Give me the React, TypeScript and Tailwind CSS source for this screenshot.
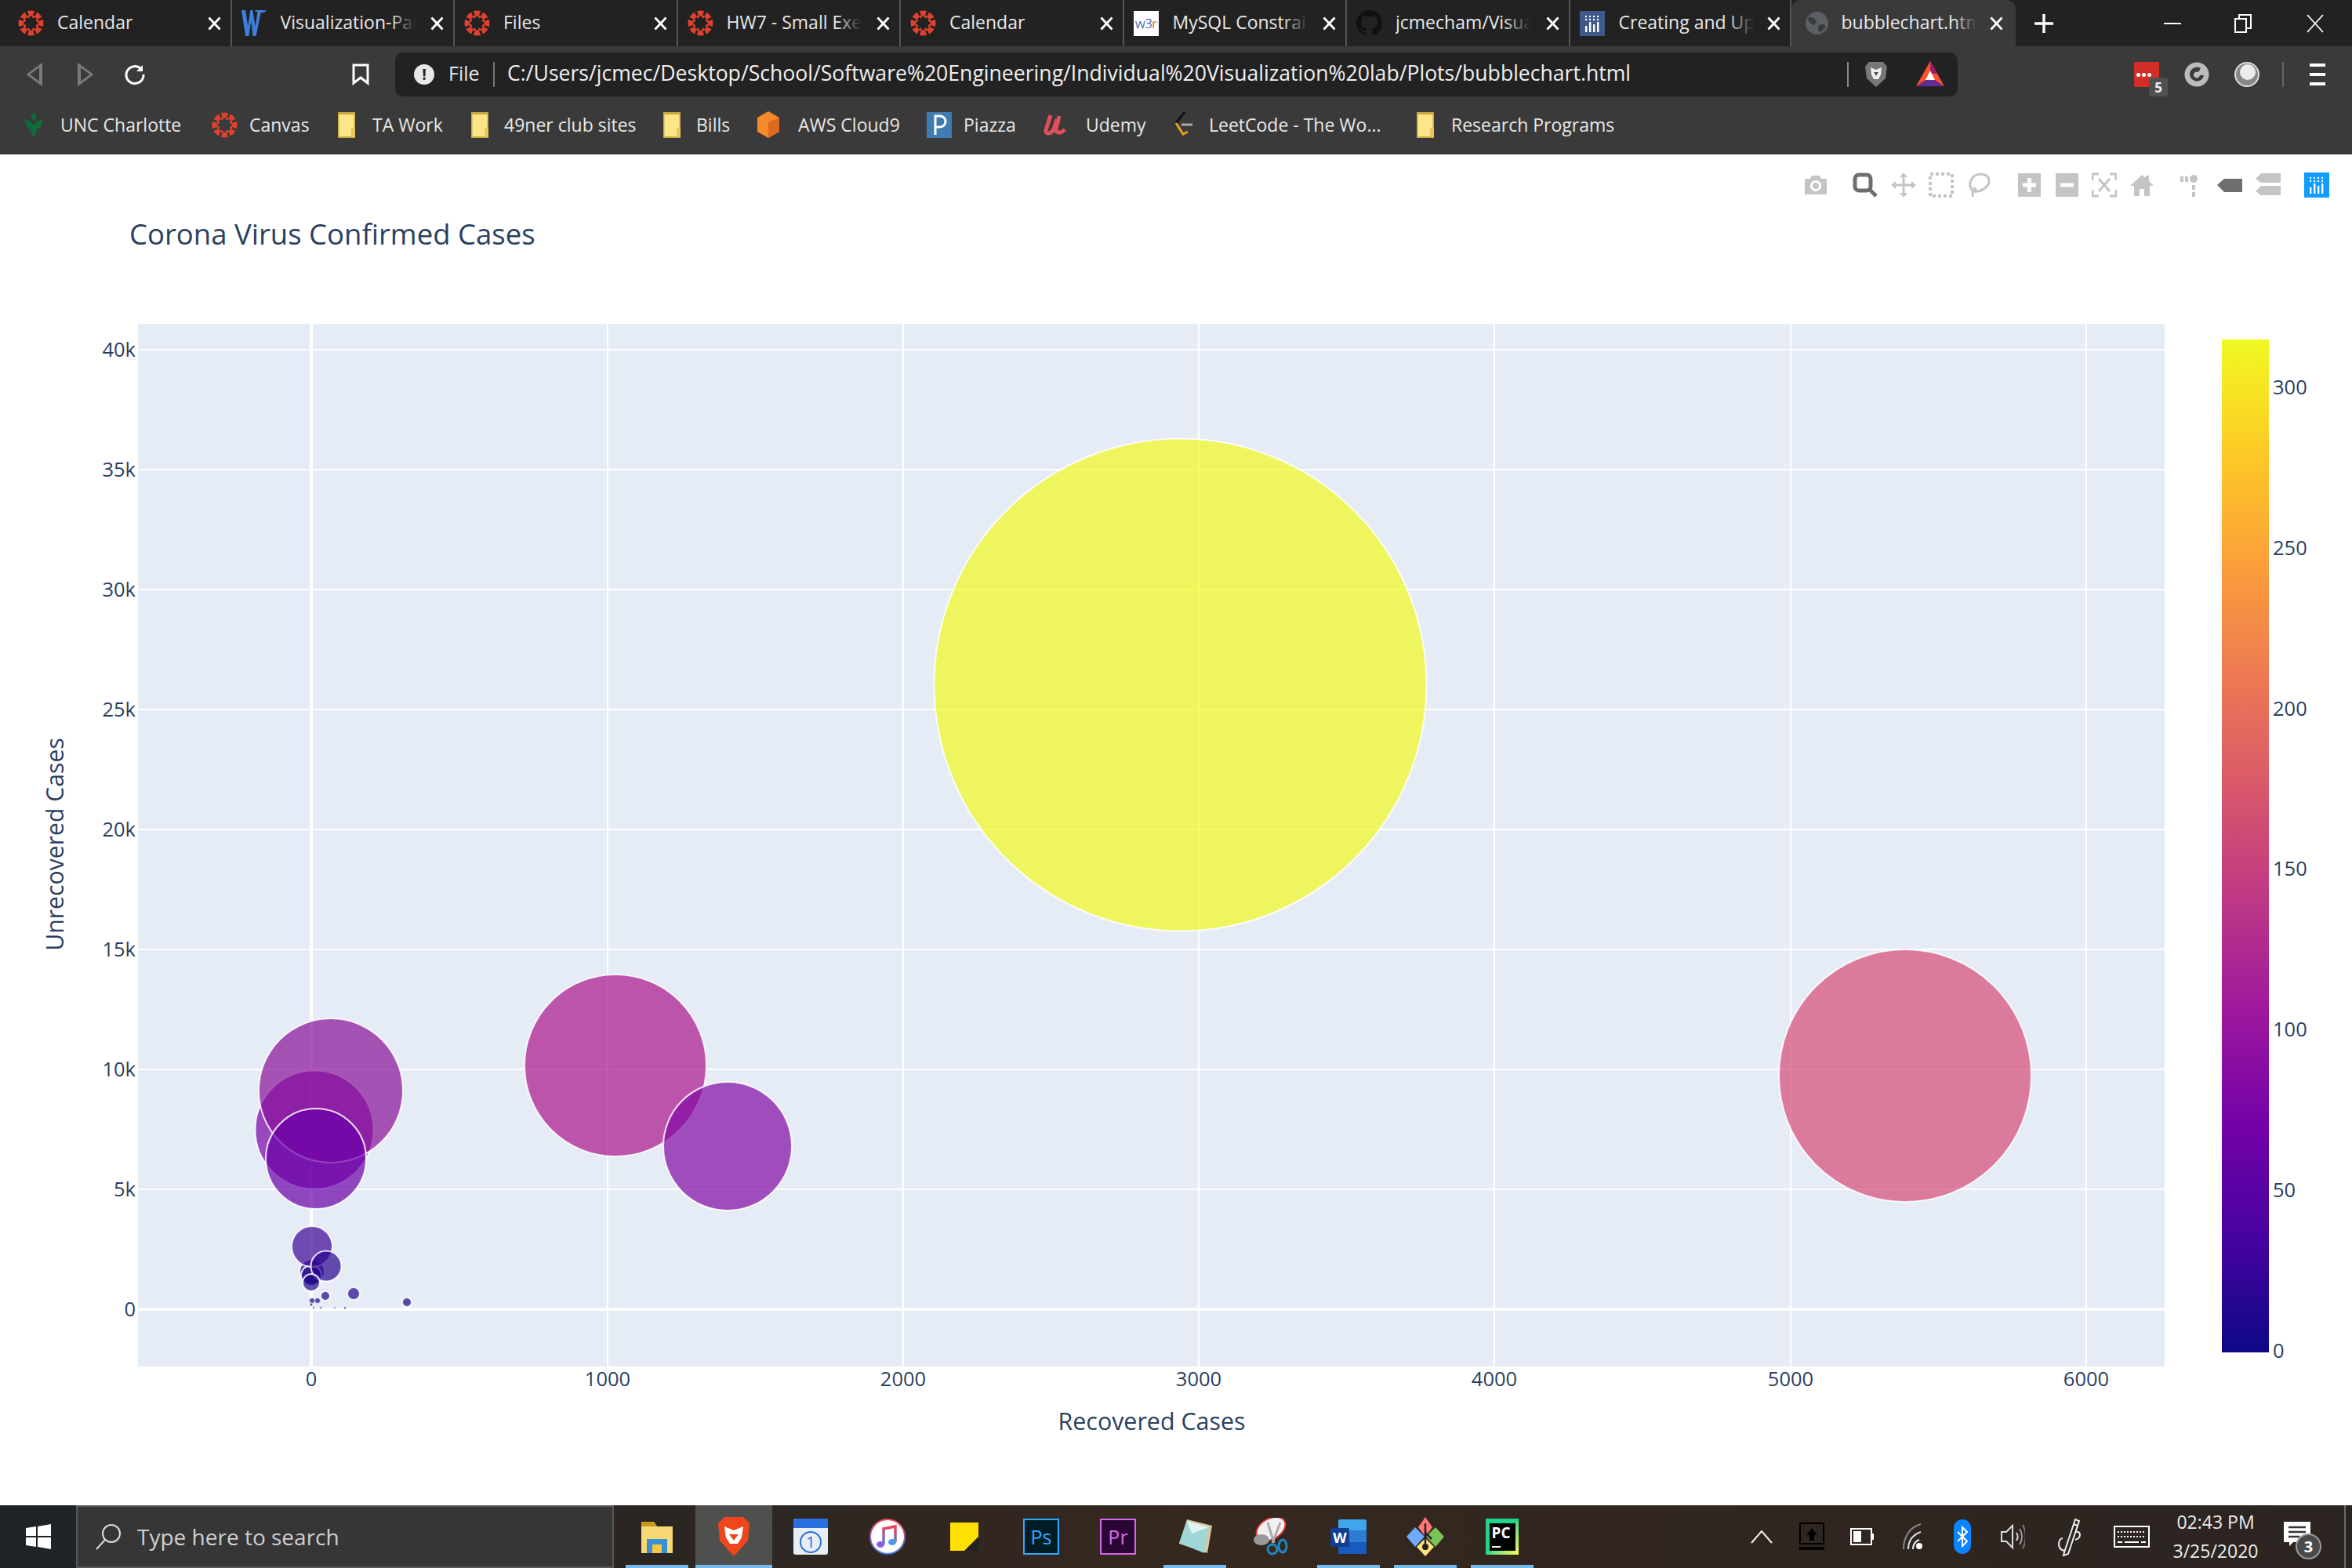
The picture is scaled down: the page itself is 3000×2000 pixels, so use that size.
import React from "react";

const Canvas = ({ s = 33 }: { s?: number }) => (
  <svg width={s} height={s} viewBox="0 0 32 32" fill="#e0402e">
    {[0, 1, 2, 3, 4, 5, 6, 7].map((i) => (
      <g key={i}>
        <path d="M11.500 1.200 a15.500 15.500 0 0 1 9 0 l-2.500 6.300 a8.500 8.500 0 0 0 -4 0z" transform={`rotate(${i * 45} 16 16)`} />
        <circle cx="16" cy="7.500" r="1.700" transform={`rotate(${i * 45 + 22.5} 16 16)`} />
      </g>
    ))}
  </svg>
);
const Word = () => (
  <svg width="33" height="33" viewBox="0 0 32 32" fill="#3f7fdc">
    <path d="M0 0h5l3 20 3-20h3l3 20 3-18h-3V0h14l-3 3h-4l-6 29h-4L12 13 9 32H5z" />
  </svg>
);
const W3 = () => (
  <div className="w-[32px] h-[32px] bg-white flex items-center justify-center text-[17px] leading-none tracking-tighter">
    <span className="text-[#4a6fb5]">w3</span>
    <span className="text-[#e8703a]">r</span>
  </div>
);
const Github = () => (
  <svg width="33" height="33" viewBox="0 0 16 16" fill="#111">
    <path d="M8 0C3.58 0 0 3.58 0 8c0 3.54 2.29 6.53 5.47 7.59.4.07.55-.17.55-.38 0-.19-.01-.82-.01-1.49-2.01.37-2.53-.49-2.69-.94-.09-.23-.48-.94-.82-1.13-.28-.15-.68-.52-.01-.53.63-.01 1.08.58 1.23.82.72 1.21 1.87.87 2.33.66.07-.52.28-.87.51-1.07-1.78-.2-3.64-.89-3.64-3.95 0-.87.31-1.59.82-2.15-.08-.2-.36-1.02.08-2.12 0 0 .67-.21 2.2.82.64-.18 1.32-.27 2-.27s1.36.09 2 .27c1.53-1.04 2.2-.82 2.2-.82.44 1.1.16 1.92.08 2.12.51.56.82 1.27.82 2.15 0 3.07-1.87 3.75-3.65 3.95.29.25.54.73.54 1.48 0 1.07-.01 1.93-.01 2.2 0 .21.15.46.55.38A8.01 8.01 0 0 0 16 8c0-4.42-3.58-8-8-8z" />
  </svg>
);
const PlotlyLogo = ({ s = 32, c = "#3f5a8a" }: { s?: number; c?: string }) => (
  <svg width={s} height={s} viewBox="0 0 32 32">
    <rect width="32" height="32" fill={c} />
    <g fill="#fff">
      {[7, 12, 17, 22].map((x) => (
        <g key={x}>
          <circle cx={x + 1} cy="7" r="1.2" />
          <circle cx={x + 1} cy="11" r="1.2" />
        </g>
      ))}
      <rect x="7" y="19" width="2.4" height="8" />
      <rect x="12" y="14" width="2.4" height="13" />
      <rect x="17" y="17" width="2.4" height="10" />
      <rect x="22" y="14" width="2.4" height="13" />
    </g>
  </svg>
);
const Globe = () => (
  <svg width="29" height="29" viewBox="0 0 24 24">
    <circle cx="12" cy="12" r="12" fill="#5b6066" />
    <path d="M4 5l5 2 3 4-3 3-3-1-4-5zM14 14l6-1 1 4-6 5-2-3z" fill="#3a3a3a" />
  </svg>
);
const X = ({ s = 17 }: { s?: number }) => (
  <svg width={s} height={s + 1} viewBox="0 0 17 18" stroke="#fff" strokeWidth="2.8" fill="none">
    <path d="M1.5 1.5l14 15M15.5 1.5l-14 15" />
  </svg>
);

const tabs: { label: string; icon: React.ReactNode; w: string }[] = [
  { label: "Calendar", icon: <Canvas />, w: "w-[284.5px]" },
  { label: "Visualization-Part", icon: <Word />, w: "w-[284.5px]" },
  { label: "Files", icon: <Canvas />, w: "w-[284.5px]" },
  { label: "HW7 - Small Exercise", icon: <Canvas />, w: "w-[284.5px]" },
  { label: "Calendar", icon: <Canvas />, w: "w-[284.5px]" },
  { label: "MySQL Constraints", icon: <W3 />, w: "w-[284.5px]" },
  { label: "jcmecham/Visualize", icon: <Github />, w: "w-[284.5px]" },
  { label: "Creating and Updating", icon: <PlotlyLogo />, w: "w-[282px]" },
];

function TabBar() {
  return (
    <div className="h-[59px] bg-[#222222] flex pl-[11px] text-white shrink-0">
      {tabs.map((t, i) => (
        <div key={i} className={`${t.w} h-full flex items-center pl-[12px] pr-[12px] border-r-2 border-[#555555] last:border-r-0`}>
          <div className="w-[50px] shrink-0">{t.icon}</div>
          <div className="relative w-[172px] overflow-hidden whitespace-nowrap text-[23px] pb-[2px] text-[#e8e8e8]">
            {t.label}
            <div className="absolute right-0 top-0 bottom-0 w-[32px] bg-linear-to-r from-transparent to-[#222222]" />
          </div>
          <div className="ml-auto">
            <X />
          </div>
        </div>
      ))}
      <div className="w-[286px] h-full bg-[#3a3a3a] rounded-t-[12px] flex items-center pl-[18px] pr-[16px]">
        <div className="w-[46px] shrink-0">
          <Globe />
        </div>
        <div className="relative w-[172px] overflow-hidden whitespace-nowrap text-[23px] pb-[2px] text-[#e8e8e8]">
          bubblechart.html
          <div className="absolute right-0 top-0 bottom-0 w-[28px] bg-linear-to-r from-transparent to-[#3a3a3a]" />
        </div>
        <div className="ml-auto">
          <X />
        </div>
      </div>
      <div className="ml-[22px] flex items-center">
        <svg width="28" height="28" viewBox="0 0 28 28" stroke="#fff" strokeWidth="3.4">
          <path d="M14 2v24M2 14h24" />
        </svg>
      </div>
      <div className="ml-auto flex items-center pr-[36px]">
        <svg width="22" height="4" viewBox="0 0 22 4">
          <rect width="22" height="2" y="1" fill="#fff" />
        </svg>
        <svg className="ml-[68px]" width="22" height="24" viewBox="0 0 22 24" fill="none" stroke="#fff" strokeWidth="2">
          <rect x="1" y="6" width="14" height="17" />
          <path d="M6 6V1h15v17h-6" />
        </svg>
        <svg className="ml-[70px]" width="22" height="24" viewBox="0 0 22 24" stroke="#fff" strokeWidth="1.8">
          <path d="M1 1l20 22M21 1L1 23" />
        </svg>
      </div>
    </div>
  );
}

const Folder = () => (
  <svg width="22" height="33" viewBox="0 0 22 33">
    <rect width="22" height="33" fill="#c9a83e" />
    <rect x="1.5" y="3" width="19" height="28" fill="#fde68a" />
    <rect x="17" y="20" width="5" height="12" fill="#e8c85a" />
  </svg>
);

const bookmarks: { label: string; w: string; iconW: string; icon: React.ReactNode }[] = [
  {
    label: "UNC Charlotte",
    w: "w-[242px]",
    iconW: "w-[49px]",
    icon: (
      <svg width="30" height="32" viewBox="0 0 30 32" fill="#0f6b3c">
        <path d="M15 0l4 7-4 4-4-4zM3 9l8 3 4 5 4-5 8-3-3 10-5 3-2 8h-4l-2-8-5-3z" />
      </svg>
    ),
  },
  { label: "Canvas", w: "w-[161px]", iconW: "w-[48px]", icon: <Canvas /> },
  { label: "TA Work", w: "w-[170px]", iconW: "w-[44px]", icon: <Folder /> },
  { label: "49ner club sites", w: "w-[245px]", iconW: "w-[42px]", icon: <Folder /> },
  { label: "Bills", w: "w-[118px]", iconW: "w-[42px]", icon: <Folder /> },
  {
    label: "AWS Cloud9",
    w: "w-[218px]",
    iconW: "w-[54px]",
    icon: (
      <svg width="32" height="34" viewBox="0 0 32 34">
        <path d="M16 0l14 8v18l-14 8-14-8V8z" fill="#f58a2a" />
        <path d="M16 14l14-6v18l-14 8z" fill="#dd6a1f" />
      </svg>
    ),
  },
  {
    label: "Piazza",
    w: "w-[149px]",
    iconW: "w-[47px]",
    icon: (
      <div className="w-[32px] h-[33px] bg-[#3e7cb1] flex items-center justify-center">
        <svg width="20" height="26" viewBox="0 0 20 26" fill="none" stroke="#fff" strokeWidth="3">
          <path d="M5 26V2h6a7 7 0 0 1 0 14H5" />
        </svg>
      </div>
    ),
  },
  {
    label: "Udemy",
    w: "w-[164px]",
    iconW: "w-[54px]",
    icon: (
      <svg width="30" height="30" viewBox="0 0 30 30" fill="none" stroke="#e0505a" strokeWidth="5">
        <path d="M9 3L3 22c-1 6 8 6 11-4l3-10M20 4l-4 17c0 5 6 6 11 0" />
      </svg>
    ),
  },
  {
    label: "LeetCode - The Wo...",
    w: "w-[312px]",
    iconW: "w-[47px]",
    icon: (
      <svg width="28" height="34" viewBox="0 0 28 34" fill="none" strokeWidth="3">
        <path d="M16 1L5 15" stroke="#111" />
        <path d="M5 15l9 14 6-3" stroke="#e8a020" />
        <path d="M12 17h14" stroke="#aaa" />
      </svg>
    ),
  },
  { label: "Research Programs", w: "w-[400px]", iconW: "w-[44px]", icon: <Folder /> },
];

function Toolbar() {
  return (
    <div className="h-[138px] bg-[#3a3a3a] shrink-0 text-white">
      <div className="h-[72px] flex items-center pl-[30px]">
        <svg width="28" height="32" viewBox="0 0 14 32" preserveAspectRatio="none" fill="none" stroke="#7a7a7a" strokeWidth="2">
          <path d="M11 4L3 16l8 12z" />
        </svg>
        <svg className="ml-[37px]" width="28" height="32" viewBox="0 0 14 32" preserveAspectRatio="none" fill="none" stroke="#7a7a7a" strokeWidth="2">
          <path d="M3 4l8 12-8 12z" />
        </svg>
        <svg className="ml-[35px]" width="28" height="28" viewBox="0 0 28 28" fill="none" stroke="#fff" strokeWidth="3">
          <path d="M22 7a11 11 0 1 0 3 7" />
          <path d="M24 2v8h-8z" fill="#fff" stroke="none" />
        </svg>
        <svg className="ml-[262px]" width="24" height="28" viewBox="0 0 24 28" fill="none" stroke="#fff" strokeWidth="3">
          <path d="M3 2h18v23l-9-7-9 7z" />
        </svg>
        <div className="ml-[32px] w-[1993px] h-[56px] bg-[#222222] rounded-[10px] flex items-center pl-[24px] pr-[17px]">
          <div className="w-[26px] h-[26px] rounded-full bg-[#e8e8e8] text-[#222] flex items-center justify-center text-[20px] font-bold leading-none">!</div>
          <div className="ml-[18px] w-[57px] text-[25px] text-[#e8e8e8] pb-[2px]">File</div>
          <div className="w-[2px] h-[32px] bg-[#777]" />
          <div className="ml-[16px] text-[26.6px] text-[#f0f0f0] whitespace-nowrap flex-1 pb-[2px]">
            C:/Users/jcmec/Desktop/School/Software%20Engineering/Individual%20Visualization%20lab/Plots/bubblechart.html
          </div>
          <div className="w-[2px] h-[32px] bg-[#888]" />
          <svg className="ml-[20px]" width="30" height="34" viewBox="0 0 30 34">
            <path d="M6 1h18l5 6-2 15-12 11L3 22 1 7z" fill="#777" />
            <path d="M8 8l7 3 7-3-1 9-3 6h-6l-3-6z" fill="#eee" />
            <path d="M12 14h6l-3 5z" fill="#555" />
          </svg>
          <svg className="ml-[36px]" width="36" height="34" viewBox="0 0 36 34">
            <path d="M18 0L36 32H0z" fill="#ff5030" />
            <path d="M18 0l9 16H18z" fill="#9e1f63" />
            <path d="M18 12l6 12H12z" fill="#fff" />
            <path d="M0 32l12-8h12l12 8z" fill="#662d91" />
          </svg>
        </div>
        <div className="ml-[225px] relative w-[32px] h-[32px] bg-[#d32d27] rounded-[2px] flex items-center pl-[3px] gap-[2px]">
          {[0, 1, 2].map((i) => (
            <div key={i} className="w-[5px] h-[5px] rounded-full bg-white" />
          ))}
          <div className="absolute left-[19px] top-[20px] w-[24px] h-[24px] bg-[#505050] rounded-[3px] flex items-center justify-center text-[17px] font-bold leading-none text-[#eee]">5</div>
        </div>
        <svg className="ml-[32px]" width="32" height="32" viewBox="0 0 32 32">
          <circle cx="16" cy="16" r="15.5" fill="#bbb" />
          <path d="M21 8a9 9 0 1 0 4 9h-5a4 4 0 1 1-2-4z" fill="#3a3a3a" />
        </svg>
        <svg className="ml-[32px]" width="32" height="32" viewBox="0 0 32 32">
          <circle cx="16" cy="16" r="15" fill="#888" stroke="#ddd" strokeWidth="2" />
          <circle cx="17" cy="13" r="10" fill="#ececec" />
        </svg>
        <div className="ml-[29px] w-[2px] h-[32px] bg-[#666]" />
        <div className="ml-[33px] w-[20px] flex flex-col gap-[8px]">
          <div className="h-[4px] bg-white" />
          <div className="h-[4px] bg-white" />
          <div className="h-[4px] bg-white" />
        </div>
      </div>
      <div className="h-[56px] flex items-center pl-[28px] text-[23px] text-[#e8e8e8]">
        {bookmarks.map((b) => (
          <div key={b.label} className={`${b.w} shrink-0 flex items-center whitespace-nowrap`}>
            <div className={`${b.iconW} shrink-0 flex items-center`}>{b.icon}</div>
            <span>{b.label}</span>
          </div>
        ))}
      </div>
    </div>
  );
}

const modeColor = "#c4c4c4";
const modebar: { ml: string; el: React.ReactNode }[] = [
  {
    ml: "ml-0",
    el: (
      <svg width="32" height="32" viewBox="0 0 32 32" fill={modeColor}>
        <path d="M2 8h7l2-4h10l2 4h7v20H2z" />
        <circle cx="16" cy="17" r="7" fill="#fff" />
        <circle cx="16" cy="17" r="4" fill={modeColor} />
      </svg>
    ),
  },
  {
    ml: "ml-[31px]",
    el: (
      <svg width="32" height="32" viewBox="0 0 32 32" fill="none" stroke="#6e6e6e" strokeWidth="5">
        <rect x="3" y="3" width="20" height="20" rx="5" />
        <path d="M21 21l9 9" />
      </svg>
    ),
  },
  {
    ml: "ml-[17px]",
    el: (
      <svg width="32" height="32" viewBox="0 0 32 32" fill={modeColor}>
        <path d="M16 0l5 6h-3.500v8.500h8.500V11l6 5-6 5v-3.500h-8.500V26H21l-5 6-5-6h3.500v-8.500H6V21l-6-5 6-5v3.500h8.500V6H11z" />
      </svg>
    ),
  },
  {
    ml: "ml-[16px]",
    el: (
      <svg width="32" height="32" viewBox="0 0 32 32" fill="none" stroke={modeColor} strokeWidth="4" strokeDasharray="4 3">
        <rect x="2" y="2" width="28" height="28" />
      </svg>
    ),
  },
  {
    ml: "ml-[16px]",
    el: (
      <svg width="32" height="32" viewBox="0 0 32 32" fill="none" stroke={modeColor} strokeWidth="3">
        <path d="M9 24C1 17 5 3 18 2c12 0 14 11 7 17-5 4-11 6-16 5zM9 24c-2 2 0 5-1 7M9 20c3 0 4 3 2 5" />
      </svg>
    ),
  },
  {
    ml: "ml-[32px]",
    el: (
      <svg width="32" height="32" viewBox="0 0 32 32">
        <rect width="29" height="30" x="2" y="1" fill={modeColor} />
        <path d="M16.500 7v18M8 16h17" stroke="#fff" strokeWidth="5" />
      </svg>
    ),
  },
  {
    ml: "ml-[16px]",
    el: (
      <svg width="32" height="32" viewBox="0 0 32 32">
        <rect width="29" height="30" x="2" y="1" fill={modeColor} />
        <path d="M8 16h17" stroke="#fff" strokeWidth="5" />
      </svg>
    ),
  },
  {
    ml: "ml-[16px]",
    el: (
      <svg width="32" height="32" viewBox="0 0 32 32" fill="none" stroke={modeColor} strokeWidth="3">
        <path d="M9 2H1v8M23 2h8v8M9 30H1v-8M23 30h8v-8M9 8l14 16M23 8L9 24" />
      </svg>
    ),
  },
  {
    ml: "ml-[16px]",
    el: (
      <svg width="32" height="32" viewBox="0 0 32 32" fill={modeColor}>
        <path d="M16 3L1 17h5v13h7v-9h6v9h7V17h5l-6-6V4h-4v3z" />
      </svg>
    ),
  },
  {
    ml: "ml-[30px]",
    el: (
      <svg width="32" height="32" viewBox="0 0 32 32" fill={modeColor}>
        <rect x="3" y="5" width="4" height="7" />
        <rect x="9" y="5" width="4" height="7" />
        <circle cx="20" cy="8" r="5" />
        <rect x="18" y="16" width="4" height="6" />
        <rect x="18" y="25" width="4" height="6" />
      </svg>
    ),
  },
  {
    ml: "ml-[18px]",
    el: (
      <svg width="32" height="32" viewBox="0 0 32 32" fill="#6e6e6e">
        <path d="M0 16l9-8h23v17H9z" />
      </svg>
    ),
  },
  {
    ml: "ml-[17px]",
    el: (
      <svg width="32" height="32" viewBox="0 0 32 32" fill={modeColor}>
        <path d="M0 8l7-7h25v12H7zM0 24l7-7h25v12H7z" />
      </svg>
    ),
  },
  { ml: "ml-[30px]", el: <PlotlyLogo c="#119dff" /> },
];

type B = [number, number, number, string];
const bubbles: B[] = [
  [1505.5, 873.5, 314, "#f2f91e"],
  [2430, 1372, 161, "#d64a78"],
  [785, 1359, 116, "#ac148c"],
  [928, 1462, 82, "#8208a5"],
  [401, 1441, 75.5, "#7a03a8"],
  [422, 1391, 92, "#890f99"],
  [403, 1478, 64, "#6a00a8"],
  [398, 1622, 16, "#2a0590"],
  [397, 1627, 13, "#1f068c"],
  [398, 1590, 26, "#3b0494"],
  [416, 1615, 19.5, "#2a0590"],
  [397, 1636, 11, "#1f068c"],
  [415, 1653, 6, "#1f068c"],
  [451, 1650, 8, "#1f068c"],
  [519, 1661, 6, "#1f068c"],
  [398, 1659, 3.5, "#12078a"],
  [405, 1659, 3.5, "#1f068c"],
  [397, 1664, 2, "#12078a"],
  [427, 1668, 1.2, "#12078a"],
  [440, 1668, 1.6, "#12078a"],
  [400, 1668, 1.4, "#12078a"],
  [409, 1668, 1.4, "#12078a"],
];

const xGrid: [number, string][] = [
  [397, "0"],
  [775, "1000"],
  [1152, "2000"],
  [1529, "3000"],
  [1906, "4000"],
  [2284, "5000"],
  [2661, "6000"],
];
const yGrid: [number, string][] = [
  [1670, "0"],
  [1517, "5k"],
  [1364, "10k"],
  [1211, "15k"],
  [1058, "20k"],
  [905, "25k"],
  [752, "30k"],
  [599, "35k"],
  [446, "40k"],
];
const cTicks: [number, string][] = [
  [1723, "0"],
  [1518, "50"],
  [1313, "100"],
  [1108, "150"],
  [904, "200"],
  [699, "250"],
  [494, "300"],
];
const stops = ["#0d0887", "#46039f", "#7201a8", "#9c179e", "#bd3786", "#d8576b", "#ed7953", "#fb9f3a", "#fdca26", "#f0f921"];

function Chart() {
  const ink = "#2a3f5f";
  return (
    <div className="relative flex-1 bg-white">
      <svg width="3000" height="1723" viewBox="0 197 3000 1723" className="block">
        <defs>
          <linearGradient id="plasma" x1="0" y1="1" x2="0" y2="0">
            {stops.map((c, i) => (
              <stop key={c} offset={i / 9} stopColor={c} />
            ))}
          </linearGradient>
          <clipPath id="plot">
            <rect x="176" y="413" width="2585" height="1330" />
          </clipPath>
        </defs>
        <text x="165" y="312" fontSize="36.5" fill={ink}>Corona Virus Confirmed Cases</text>
        <rect x="176" y="413" width="2585" height="1330" fill="#e5ecf6" />
        <g stroke="#fff" strokeWidth="2">
          {xGrid.map(([x]) => (
            <line key={x} x1={x} x2={x} y1="413" y2="1743" strokeWidth={x === 397 ? 4 : 2} />
          ))}
          {yGrid.map(([y]) => (
            <line key={y} x1="176" x2="2761" y1={y} y2={y} strokeWidth={y === 1670 ? 4 : 2} />
          ))}
        </g>
        <g clipPath="url(#plot)">
          {bubbles.map(([x, y, r, c], i) => (
            <circle key={i} cx={x} cy={y} r={r} fill={c} fillOpacity="0.7" stroke="#fff" strokeOpacity="0.85" strokeWidth={r < 5 ? 0.8 : 2} />
          ))}
        </g>
        <g fontSize="25.5" fill={ink}>
          {xGrid.map(([x, t]) => (
            <text key={t} x={x} y="1768" textAnchor="middle">{t}</text>
          ))}
          {yGrid.map(([y, t]) => (
            <text key={t} x="173" y={y + 9} textAnchor="end">{t}</text>
          ))}
          {cTicks.map(([y, t]) => (
            <text key={t} x="2899" y={y + 9}>{t}</text>
          ))}
        </g>
        <text x="1469" y="1824" fontSize="30.4" fill={ink} textAnchor="middle">Recovered Cases</text>
        <text x="0" y="0" fontSize="30.2" fill={ink} textAnchor="middle" transform="translate(81 1077) rotate(-90)">Unrecovered Cases</text>
        <rect x="2834" y="433" width="60" height="1292" fill="url(#plasma)" />
      </svg>
      <div className="absolute top-[23px] right-[29px] flex items-center">
        {modebar.map((m, i) => (
          <div key={i} className={m.ml}>{m.el}</div>
        ))}
      </div>
    </div>
  );
}

const tb: { u?: boolean; active?: boolean; el: React.ReactNode }[] = [
  {
    u: true,
    el: (
      <svg width="44" height="46" viewBox="0 0 44 46">
        <path d="M2 4h16l4 6h20v34H2z" fill="#f8d775" />
        <path d="M2 4h16l4 6H2z" fill="#c99a1a" />
        <path d="M9 44V26h26v18h-7V33H16v11z" fill="#3a8fd0" />
        <rect x="16" y="33" width="12" height="11" fill="#f5c842" />
      </svg>
    ),
  },
  {
    u: true,
    active: true,
    el: (
      <svg width="44" height="50" viewBox="0 0 44 50">
        <path d="M10 0h24l8 8-2 22-18 20L4 30 2 8z" fill="#f0461e" />
        <path d="M10 12l12 5 12-5-2 14-5 8H17l-5-8z" fill="#fff" />
        <path d="M16 22h12l-6 8z" fill="#f0461e" />
      </svg>
    ),
  },
  {
    el: (
      <div className="w-[44px] h-[46px] rounded-[3px] overflow-hidden bg-[#e8eef5] flex flex-col items-center">
        <div className="w-full h-[12px] bg-[#2a6fe0]" />
        <div className="mt-[4px] w-[28px] h-[28px] rounded-full border-[2px] border-[#2a6fe0] text-[#2a6fe0] flex items-center justify-center text-[20px] leading-none">1</div>
      </div>
    ),
  },
  {
    el: (
      <svg width="46" height="46" viewBox="0 0 46 46">
        <defs>
          <linearGradient id="itn" x1="0" y1="0" x2="0" y2="1">
            <stop offset="0" stopColor="#f0445a" />
            <stop offset="1" stopColor="#4a7ce8" />
          </linearGradient>
        </defs>
        <circle cx="23" cy="23" r="22" fill="#fff" stroke="url(#itn)" strokeWidth="2" />
        <path d="M18 33V13l15-3v20" fill="none" stroke="url(#itn)" strokeWidth="3.5" />
        <ellipse cx="14" cy="33" rx="5" ry="4" fill="#8a5ce8" />
        <ellipse cx="29" cy="30" rx="5" ry="4" fill="#4a9ce8" />
      </svg>
    ),
  },
  {
    el: (
      <svg width="36" height="36" viewBox="0 0 36 36">
        <rect width="36" height="36" fill="#ffe000" />
        <path d="M36 18v18H18z" fill="#222" />
      </svg>
    ),
  },
  {
    el: (
      <div className="w-[46px] h-[46px] bg-[#001d26] border-[2px] border-[#31a8ff] flex items-center justify-center text-[25px] leading-none text-[#31a8ff]">Ps</div>
    ),
  },
  {
    el: (
      <div className="w-[46px] h-[46px] bg-[#2a0634] border-[2px] border-[#d36bea] flex items-center justify-center text-[25px] leading-none text-[#d36bea]">Pr</div>
    ),
  },
  {
    u: true,
    el: (
      <svg width="44" height="46" viewBox="0 0 44 46">
        <path d="M12 1l32 8-6 35-36-12z" fill="#d8c9a0" />
        <path d="M12 3l28 8-6 33L2 31z" fill="#9fd6d8" />
        <path d="M12 3l28 8-22 8z" fill="#dff3f3" />
      </svg>
    ),
  },
  {
    el: (
      <svg width="46" height="48" viewBox="0 0 46 48">
        <ellipse cx="22" cy="14" rx="20" ry="13" fill="#f0f0f0" stroke="#d33" strokeWidth="2" transform="rotate(-30 22 14)" />
        <path d="M18 6l8 26M34 6l-10 26" stroke="#aaa" strokeWidth="3" />
        <ellipse cx="10" cy="28" rx="10" ry="7" fill="#999" />
        <circle cx="24" cy="40" r="6" fill="none" stroke="#1e88c8" strokeWidth="3" />
        <ellipse cx="37" cy="36" rx="5" ry="8" fill="none" stroke="#1e88c8" strokeWidth="3" />
      </svg>
    ),
  },
  {
    u: true,
    el: (
      <svg width="46" height="46" viewBox="0 0 46 46">
        <rect x="10" y="1" width="36" height="44" rx="3" fill="#41a5ee" />
        <rect x="10" y="15" width="36" height="15" fill="#2b7cd3" />
        <rect x="10" y="30" width="36" height="15" fill="#185abd" />
        <rect y="12" width="24" height="24" rx="2" fill="#103f91" />
        <text x="12" y="31" fontSize="18" fontWeight="700" fill="#fff" textAnchor="middle">W</text>
      </svg>
    ),
  },
  {
    u: true,
    el: (
      <svg width="48" height="50" viewBox="0 0 48 50">
        <path d="M24 0l9 13-9 12-9-12z" fill="#f77" />
        <path d="M11 13l12 12-12 13L0 25z" fill="#6ea8ff" />
        <path d="M37 13l11 12-11 13-12-13z" fill="#7ac555" />
        <path d="M24 27l11 11-11 12-11-12z" fill="#fde27a" />
        <path d="M24 8v34M24 20l8 8" stroke="#222" strokeWidth="2.5" fill="none" />
        <circle cx="24" cy="38" r="4" fill="#222" />
      </svg>
    ),
  },
  {
    u: true,
    el: (
      <div className="w-[42px] h-[46px] bg-linear-to-br from-[#20d28a] via-[#21d789] to-[#fcf84a] flex items-center justify-center">
        <div className="w-[33px] h-[35px] bg-black text-white text-[19px] font-bold leading-none pl-[3px] pt-[3px] flex flex-col justify-between pb-[4px]">
          <span>PC</span>
          <div className="w-[11px] h-[2px] bg-white" />
        </div>
      </div>
    ),
  },
];

function Taskbar() {
  return (
    <div className="h-[80px] shrink-0 bg-linear-to-r from-[#1f2326] via-[#35281f] to-[#2b2421] flex text-white">
      <div className="w-[97px] flex items-center justify-center">
        <svg width="32" height="32" viewBox="0 0 32 32" fill="#fff">
          <path d="M0 5l13-2v12H0zM15 3l17-3v15H15zM0 17h13v12L0 27zM15 17h17v15l-17-3z" />
        </svg>
      </div>
      <div className="w-[686px] h-full bg-[#363636] border-2 border-[#585858] flex items-center pl-[22px] text-[28px] text-[#cfcfcf]">
        <svg width="34" height="34" viewBox="0 0 34 34" fill="none" stroke="#ddd" strokeWidth="2">
          <circle cx="21" cy="13" r="11" />
          <path d="M13 21L2 33" />
        </svg>
        <span className="ml-[20px]">Type here to search</span>
      </div>
      <div className="ml-[6px] flex">
        {tb.map((t, i) => (
          <div key={i} className={`relative w-[98px] h-full flex items-center justify-center ${t.active ? "bg-[#4f4f4d]" : ""}`}>
            {t.el}
            {t.u && <div className={`absolute bottom-0 h-[4px] bg-[#76b9ed] ${t.active ? "left-0 right-0" : "left-[9px] right-[9px]"}`} />}
          </div>
        ))}
      </div>
      <div className="ml-auto flex items-center pr-[27px] relative">
        <div className="w-[64px] flex justify-center">
          <svg width="28" height="18" viewBox="0 0 28 18" fill="none" stroke="#eee" strokeWidth="2">
            <path d="M1 17L14 2l13 15" />
          </svg>
        </div>
        <div className="w-[64px] flex justify-center">
          <svg width="32" height="36" viewBox="0 0 32 36">
            <rect x="1" y="1" width="30" height="26" fill="none" stroke="#000" strokeWidth="2" />
            <path d="M16 7l7 9h-4v7h-6v-7H9z" fill="#000" />
            <rect y="31" width="32" height="4" fill="#000" />
          </svg>
        </div>
        <div className="w-[64px] flex justify-center">
          <svg width="30" height="22" viewBox="0 0 30 22">
            <rect x="1" y="1" width="26" height="20" fill="none" stroke="#fff" strokeWidth="2" />
            <rect x="4" y="4" width="10" height="14" fill="#fff" />
            <rect x="28" y="7" width="2" height="8" fill="#fff" />
          </svg>
        </div>
        <div className="w-[64px] flex justify-center">
          <svg width="26" height="36" viewBox="0 0 26 36" fill="none">
            <path d="M2 34C2 18 10 6 24 2" stroke="#888" strokeWidth="2" />
            <path d="M8 34c0-10 5-18 16-22" stroke="#ddd" strokeWidth="2" />
            <path d="M14 34c0-6 3-10 8-12" stroke="#eee" strokeWidth="2" />
            <circle cx="22" cy="30" r="4" fill="#fff" />
          </svg>
        </div>
        <div className="w-[64px] flex justify-center">
          <div className="w-[22px] h-[44px] rounded-full bg-[#0a84ff] flex items-center justify-center">
            <svg width="14" height="28" viewBox="0 0 14 28" fill="none" stroke="#fff" strokeWidth="2">
              <path d="M1 8l12 12-6 6V2l6 6L1 20" />
            </svg>
          </div>
        </div>
        <div className="w-[64px] flex justify-center">
          <svg width="32" height="38" viewBox="0 0 32 38" fill="none" stroke="#ddd" strokeWidth="2">
            <path d="M2 13h6l8-8v28l-8-8H2z" />
            <path d="M21 14c2 3 2 7 0 10" />
            <path d="M25 9c4 6 4 14 0 20" stroke="#999" />
            <path d="M29 4c5 9 5 21 0 30" stroke="#777" />
          </svg>
        </div>
        <div className="w-[82px] flex justify-center">
          <svg width="34" height="52" viewBox="0 0 34 52" fill="none" stroke="#eee" strokeWidth="2">
            <path d="M10 46l14-42 5 2-14 42-6 2zM22 10l5 2M24 20c8-2 8 8 0 10M8 28c-6 0-8 14 2 16" />
          </svg>
        </div>
        <div className="w-[76px] flex justify-center">
          <svg width="46" height="28" viewBox="0 0 46 28" fill="none" stroke="#fff" strokeWidth="2">
            <rect x="1" y="1" width="44" height="26" />
            <path d="M5 8h36M5 14h36" strokeDasharray="2 2" />
            <path d="M5 21h6M14 21h18M35 21h6" />
          </svg>
        </div>
        <div className="w-[138px] flex flex-col items-center text-[23px] leading-[37px] text-[#eeeeee]">
          <span>02:43 PM</span>
          <span>3/25/2020</span>
        </div>
        <div className="relative w-[78px] h-full flex items-center justify-center">
          <svg width="34" height="34" viewBox="0 0 34 34" className="-translate-x-[4px] -translate-y-[2px]">
            <path d="M0 0h34v26H12l-5 5v-5H0z" fill="#fff" />
            <path d="M6 7h22M6 13h22M6 19h14" stroke="#333" strokeWidth="2.500" />
          </svg>
          <div className="absolute left-[33px] top-[36px] w-[33px] h-[33px] rounded-full bg-[#4a4a4a] border-2 border-[#9a9a9a] flex items-center justify-center text-[20px] font-bold leading-none">3</div>
        </div>
        <div className="absolute right-[8px] top-0 bottom-0 w-[2px] bg-[#6a6a6a]" />
      </div>
    </div>
  );
}

export default function App() {
  return (
    <div className="w-[3000px] h-[2000px] flex flex-col overflow-hidden font-['Open_Sans','Noto_Sans',sans-serif]">
      <TabBar />
      <Toolbar />
      <Chart />
      <Taskbar />
    </div>
  );
}
